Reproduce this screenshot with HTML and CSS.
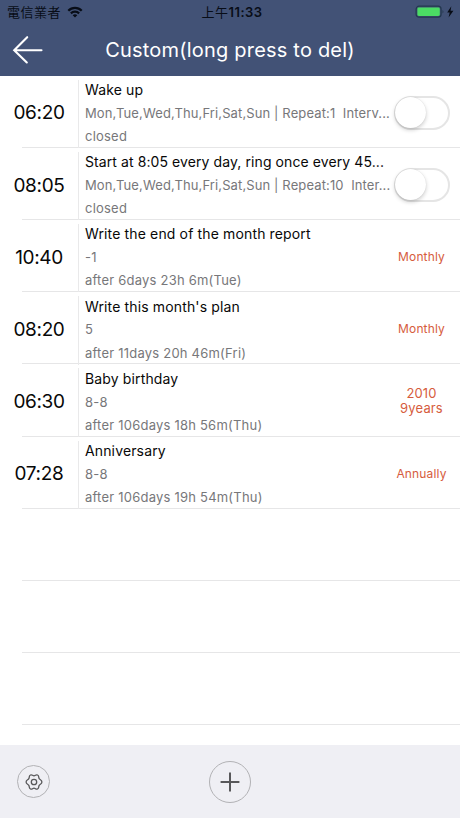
FILE: index.html
```html
<!DOCTYPE html>
<html lang="en">
<head>
<meta charset="utf-8">
<title>Custom</title>
<link rel="stylesheet" href="styles.css">
</head>
<body>
<div class="app">
  <header class="header">
    <div class="status">
      <div class="carrier"><span class="carrier-name">電信業者</span>
        <svg class="wifi" viewBox="0 0 16 12" width="16" height="12"><path d="M0.5 3.9A10.6 10.6 0 0 1 15.5 3.9L13.9 5.6A8.2 8.2 0 0 0 2.1 5.6ZM3.1 6.6A6.8 6.8 0 0 1 12.9 6.6L11.3 8.2A4.5 4.5 0 0 0 4.7 8.2ZM5.7 9.2A3.1 3.1 0 0 1 10.3 9.2L8 11.6Z"/></svg>
      </div>
      <div class="clock">上午<b>11:33</b></div>
      <div class="power">
        <svg viewBox="0 0 42 14" width="42" height="14"><rect x="1.1" y="1.2" width="25" height="11" rx="3" fill="#425276" stroke="#24384f" stroke-width="1.2"/><rect x="2.4" y="2.5" width="22.4" height="8.4" rx="1.4" fill="#4bdc64"/><path d="M27.5 5a2.2 2.2 0 0 1 0 3.6z" fill="#24384f"/><path d="M36.3 1.2 32.2 7.6h2.5l-1.1 4.9 4.8-6.8h-2.8z" fill="#080d17"/></svg>
      </div>
    </div>
    <div class="nav">
      <svg class="back" viewBox="0 0 32 30" width="32" height="30"><path d="M15.2 2.2 2.2 15.2 14.8 27.4M2.2 15.2H29.5"/></svg>
      <h1>Custom(long press to del)</h1>
    </div>
  </header>
  <main class="list">
    <div class="row"><div class="time">06:20</div><div class="info"><div class="title">Wake up</div><div class="line days">Mon,Tue,Wed,Thu,Fri,Sat,Sun | Repeat:1&nbsp; Interv...</div><div class="line">closed</div></div><div class="side"><span class="switch"></span></div></div>
    <div class="row"><div class="time">08:05</div><div class="info"><div class="title long">Start at 8:05 every day, ring once every 45...</div><div class="line days">Mon,Tue,Wed,Thu,Fri,Sat,Sun | Repeat:10&nbsp; Inter...</div><div class="line">closed</div></div><div class="side"><span class="switch"></span></div></div>
    <div class="row"><div class="time">10:40</div><div class="info"><div class="title">Write the end of the month report</div><div class="line">-1</div><div class="line">after 6days 23h 6m(Tue)</div></div><div class="side">Monthly</div></div>
    <div class="row"><div class="time">08:20</div><div class="info"><div class="title">Write this month's plan</div><div class="line">5</div><div class="line">after 11days 20h 46m(Fri)</div></div><div class="side">Monthly</div></div>
    <div class="row"><div class="time">06:30</div><div class="info"><div class="title">Baby birthday</div><div class="line">8-8</div><div class="line">after 106days 18h 56m(Thu)</div></div><div class="side years">2010<br>9years</div></div>
    <div class="row"><div class="time">07:28</div><div class="info"><div class="title">Anniversary</div><div class="line">8-8</div><div class="line">after 106days 19h 54m(Thu)</div></div><div class="side">Annually</div></div>
    <div class="row empty"></div>
    <div class="row empty"></div>
    <div class="row empty"></div>
  </main>
  <footer class="toolbar">
    <span class="round small"><svg viewBox="-9 -9 18 18" width="18" height="18"><path d="M0-6.2C1.5-6.2 1.9-7.8 3.5-7 5.4-6 4.3-4.7 5.2-3.3 6-2 7.9-2.2 7.9 0 7.9 2.2 6 2 5.2 3.3 4.3 4.7 5.4 6 3.5 7 1.9 7.8 1.5 6.2 0 6.2-1.5 6.2-1.9 7.8-3.5 7-5.4 6-4.3 4.7-5.2 3.3-6 2-7.9 2.2-7.9 0-7.9-2.2-6-2-5.2-3.3-4.3-4.7-5.4-6-3.5-7-1.9-7.8-1.5-6.2 0-6.2Z"/><circle r="2.7"/></svg></span>
    <span class="round large"><svg viewBox="0 0 20 20" width="20" height="20"><path d="M10 .6V19.4M.6 10H19.4"/></svg></span>
  </footer>
</div>
</body>
</html>
```
FILE: styles.css
```css
* { box-sizing: border-box; }
body { margin: 0; background: #fff; font-family: Inter, "Noto Sans CJK TC", sans-serif; color: #080808; }
.app { width: 460px; height: 818px; display: flex; flex-direction: column; overflow: hidden; }
.header { height: 75.7px; background: #425276; flex: none; }
.status { height: 24px; display: grid; grid-template-columns: 1fr auto 1fr; align-items: center; padding: 0 3px 0 7px; color: #080d17; font-size: 13px; }
.carrier { display: flex; align-items: center; gap: 6px; }
.carrier-name { letter-spacing: .5px; margin-top: -2px; }
.wifi { fill: #080d17; }
.clock { letter-spacing: .5px; white-space: nowrap; margin-top: -2px; }
.clock b { font-weight: 600; font-size: 13px; }
.power { display: flex; justify-content: flex-end; }
.nav { height: 51px; display: grid; grid-template-columns: 48px 1fr 48px; align-items: center; }
.back { margin-left: 12px; fill: none; stroke: #fff; stroke-width: 2.1; stroke-linecap: round; }
h1 { margin: 0; font-size: 20px; line-height: 30px; font-weight: 400; color: #fff; text-align: center; letter-spacing: .2px; white-space: nowrap; }
.list { flex: 1; min-height: 0; }
.row { height: 72.2px; display: grid; grid-template-columns: 78px 314px 1fr; background: linear-gradient(#e6e6e7, #e6e6e7) 22px 100% / 438px 1px no-repeat; }
.time { display: flex; align-items: center; justify-content: center; font-size: 19px; letter-spacing: -.35px; padding-bottom: 1px; }
.info { border-left: 1px solid #e9e9ea; margin: 4px 0 3px; padding-left: 6px; white-space: nowrap; }
.info > div { height: 23.1px; line-height: 23px; }
.info > .title { font-size: 14px; letter-spacing: .14px; margin-top: -1.6px; margin-bottom: .7px; }
.info > .long { letter-spacing: .09px; }
.line { font-size: 13px; letter-spacing: .22px; color: #77777a; }
.days { letter-spacing: .12px; }
.side { display: flex; align-items: center; justify-content: center; text-align: center; font-size: 12px; letter-spacing: .15px; color: #d65c3d; margin-right: 9px; padding-bottom: 2.4px; }
.years { font-size: 13px; line-height: 15.5px; padding-bottom: 1.4px; }
.switch { flex: none; width: 56px; height: 34px; margin: 1px -1px 0 0; border: 2px solid #e5e5e5; border-radius: 17px; display: flex; align-items: center; }
.switch::before { content: ""; width: 31px; height: 31px; margin-left: -1px; border-radius: 50%; background: #fff; box-shadow: 0 2px 4px #0003, 0 0 1px #0002; }
.toolbar { height: 73px; flex: none; background: #efeff4; display: grid; grid-template-columns: 1fr auto 1fr; align-items: center; padding: 0 17px; }
.round { border: 1px solid #b2b2b5; border-radius: 50%; display: flex; align-items: center; justify-content: center; }
.round svg { fill: none; stroke: #58585a; }
.small { width: 33px; height: 33px; }
.small svg { stroke-width: 1.3; stroke-linejoin: round; }
.large { width: 42px; height: 42px; }
.large svg { stroke-width: 2; }
```
